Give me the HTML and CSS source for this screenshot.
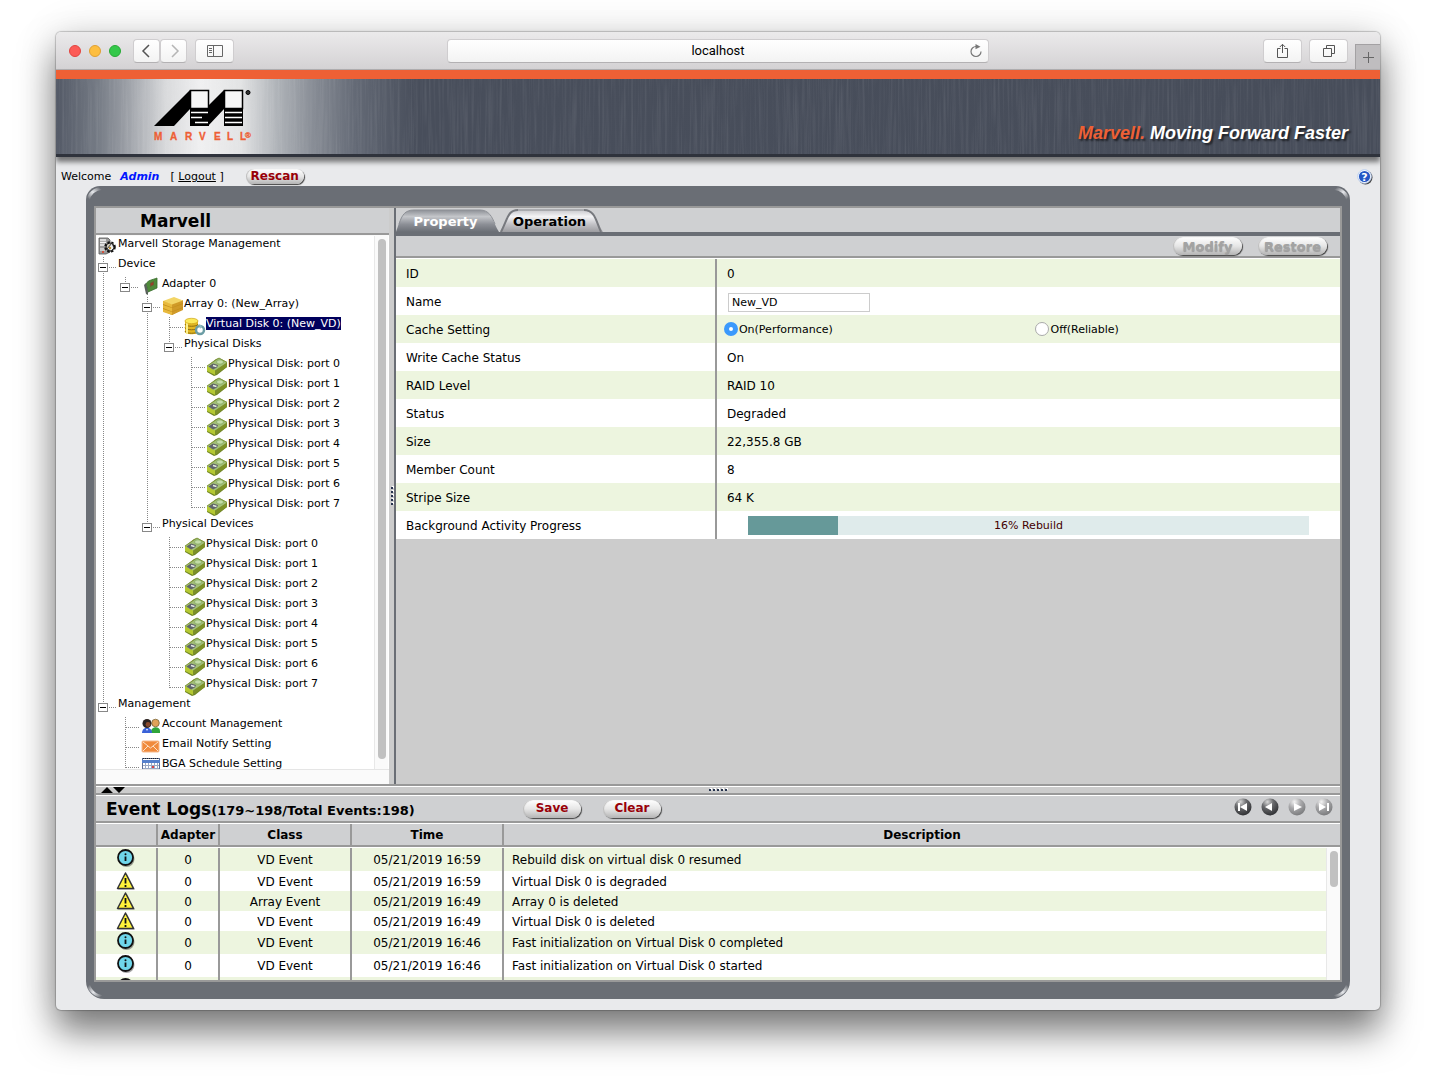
FILE: index.html
```html
<!DOCTYPE html>
<html lang="en">
<head>
    <meta charset="UTF-8">
    <meta name="viewport" content="width=device-width, initial-scale=1.0">
    <title>localhost</title>
    <link rel="stylesheet" href="styles.css">
</head>
<body>
    <!-- shared icons -->
    <svg class="defs" width="0" height="0">
        <defs>
            <linearGradient id="tabOn" x1="0" y1="0" x2="0" y2="1">
                <stop offset="0" stop-color="#8d9096"/><stop offset="0.3" stop-color="#c4c6ca"/><stop offset="0.65" stop-color="#8c8f96"/><stop offset="1" stop-color="#6a6e75"/>
            </linearGradient>
            <linearGradient id="tabOff" x1="0" y1="0" x2="0" y2="1">
                <stop offset="0" stop-color="#c8c8cc"/><stop offset="0.3" stop-color="#f4f4f6"/><stop offset="0.65" stop-color="#c2c2c6"/><stop offset="1" stop-color="#9c9ca0"/>
            </linearGradient>
            <linearGradient id="shine" x1="0" y1="1" x2="1" y2="0">
                <stop offset="0.1" stop-color="#fff" stop-opacity="0"/><stop offset="0.5" stop-color="#e4e6ea"/><stop offset="0.9" stop-color="#fff" stop-opacity="0"/>
            </linearGradient>
            <radialGradient id="ball" cx="0.35" cy="0.2" r="0.85">
                <stop offset="0" stop-color="#d8d8d8"/><stop offset="0.4" stop-color="#6a6b6e"/><stop offset="1" stop-color="#2c2d30"/>
            </radialGradient>
            <radialGradient id="ballOff" cx="0.35" cy="0.2" r="0.85">
                <stop offset="0" stop-color="#f4f4f4"/><stop offset="0.45" stop-color="#a8a8aa"/><stop offset="1" stop-color="#77787a"/>
            </radialGradient>
            <filter id="brushed" x="0" y="0" width="100%" height="100%">
                <feTurbulence type="fractalNoise" baseFrequency="0.45 0.012" numOctaves="3" seed="4"/>
                <feColorMatrix type="matrix" values="0 0 0 0 1  0 0 0 0 1  0 0 0 0 1  1.2 0 0 0 -0.5"/>
            </filter>
        </defs>
        <symbol id="disk" viewBox="0 0 22 20">
            <path d="M1 10 10 3l3-1 8 4v5l-10 8-3 1-7-4z" fill="#6f8424"/>
            <path d="M1 10v5l8 4v-5z" fill="#b4c832"/>
            <path d="M9 14v5l12-8V7z" fill="#7c9028"/>
            <path d="M1 10 13 2l8 4.500-12 8z" fill="#a3bf78"/>
            <path d="M2.500 10.500 7 7.500l5 1.500-1 2.500-4 2z" fill="#5f6468"/>
            <ellipse cx="14" cy="6" rx="3.500" ry="2.200" fill="#c3dca8" stroke="#7ba258" stroke-width="0.700"/>
            <path d="m7 9.500 3.500 1" stroke="#e6ece6" stroke-width="1.400"/>
            <path d="M1 10 13 2l8 4.500" fill="none" stroke="#7c9438" stroke-width="0.800"/>
        </symbol>
        <symbol id="storage" viewBox="0 0 22 20">
            <path d="M3 2h9l2 2v12l-4 2H3z" fill="#9a9a9a" stroke="#555" stroke-width="0.800"/>
            <path d="M4 4h6M4 6.500h6M4 9h6" stroke="#f2f2f2" stroke-width="1.300"/>
            <path d="M4 12h5v3H4z" fill="#c9c9c9"/>
            <circle cx="7" cy="16" r="1" fill="#e23b22"/>
            <circle cx="14" cy="11" r="4.800" fill="none" stroke="#111" stroke-width="2" stroke-dasharray="2.300 1.600"/>
            <circle cx="14" cy="11" r="4" fill="#d0c9b8" stroke="#111"/>
            <path d="m11 13 5-6 2 5-3 3z" fill="#eee" stroke="#222" stroke-width="0.900"/>
            <circle cx="14" cy="12" r="1.200" fill="#b98a2c"/>
        </symbol>
        <symbol id="adapter" viewBox="0 0 22 20">
            <path d="M6 8c2-4 6-4 11-6v10l-9 4z" fill="#4f8a3a" stroke="#356b2a" stroke-width="0.800"/>
            <path d="m4 9 2-2 2 9v3l-2-1z" fill="#59615a"/>
            <path d="m10 7 4-2v4l-4 2z" fill="#6d5a35"/>
            <path d="m11 7.500 2-1v2l-2 1z" fill="#a33b25"/>
        </symbol>
        <symbol id="array" viewBox="0 0 22 20">
            <path d="M1 5v10l9 4 11-6V5z" fill="#c48f1c"/>
            <path d="M1 5v3l9 3.500V8zM1 9v3l9 3.500V12zM1 13v3l9 3v-3z" fill="#e8b93c"/>
            <path d="m10 8 11-4v3L10 11.500zM10 12l11-4v3l-11 4.500zM10 16l11-4v2l-11 5z" fill="#d09a28"/>
            <path d="m1 5 11-4 9 3.500L10 8.500z" fill="#f3d566"/>
        </symbol>
        <symbol id="vdisk" viewBox="0 0 22 20">
            <path d="M1 5v11c0 3 13 3 13 0V5z" fill="#e3b722"/>
            <path d="M1 8c0 3 13 3 13 0M1 11.500c0 3 13 3 13 0M1 15c0 3 13 3 13 0" fill="none" stroke="#8d6d10"/>
            <path d="M3 5v13" stroke="#fbef8c" stroke-width="2"/>
            <ellipse cx="7.500" cy="5" rx="6.500" ry="2.700" fill="#fbe959" stroke="#cda51a" stroke-width="0.700"/>
            <circle cx="16" cy="14" r="4" fill="#fff" stroke="#6c9da5" stroke-width="2.500"/>
            <path d="m15 8 3 2-2 3z" fill="#90bcc2"/>
        </symbol>
        <symbol id="users" viewBox="0 0 22 20">
            <path d="M11 16c0-6 9-6 9-1v2h-9z" fill="#2fa53b"/>
            <circle cx="15.500" cy="7" r="3.800" fill="#e0a259" stroke="#6b5a2c" stroke-width="0.700"/>
            <path d="M2 17c0-7 10-7 10 0z" fill="#3a62d8"/>
            <circle cx="7" cy="7.500" r="4.500" fill="#2b2320"/>
            <circle cx="8" cy="8.500" r="2.400" fill="#8a4a2c"/>
            <path d="m6 13 1 2 1-2" fill="#fff"/>
        </symbol>
        <symbol id="mail" viewBox="0 0 22 20">
            <rect x="2" y="5" width="17" height="11" rx="1" fill="#f08a3c" stroke="#f6b98c"/>
            <path d="m3 6 7.500 6L18 6M3 15l5-5M18 15l-5-5" fill="none" stroke="#fde2c8"/>
        </symbol>
        <symbol id="calendar" viewBox="0 0 22 20">
            <rect x="2.500" y="2.500" width="17" height="14" fill="#fff" stroke="#5c6f96"/>
            <path d="M2 4h18v3H2z" fill="#5580cc"/>
            <path d="M3 2.500h16" stroke="#222" stroke-dasharray="1 1"/>
            <path d="M3 9.500h16M3 12.500h16M5.500 7v9M8.500 7v9M11.500 7v9M14.500 7v9M17.500 7v9" stroke="#9aa9c4"/>
            <path d="M12 10h2v2h-2z" fill="#d44"/>
        </symbol>
        <symbol id="info" viewBox="0 0 20 20">
            <circle cx="10.500" cy="11" r="8" fill="#000" opacity="0.35"/>
            <circle cx="9.500" cy="9.500" r="7.500" fill="#6fd6ea" stroke="#111" stroke-width="1.800"/>
            <path d="M9.500 8.500v4.500" stroke="#111" stroke-width="1.800"/>
            <circle cx="9.500" cy="6.300" r="1" fill="#111"/>
        </symbol>
        <symbol id="warn" viewBox="0 0 20 20">
            <path d="M2 18.500h17L11 3z" fill="#000" opacity="0.35"/>
            <path d="M9.500 2 17.500 17.500h-16z" fill="#fff33a" stroke="#333" stroke-width="1.500" stroke-linejoin="round"/>
            <path d="M9.500 7v5.500M9.500 14v2" stroke="#111" stroke-width="1.800"/>
        </symbol>
    </svg>

    <div class="window">
        <div class="toolbar">
            <div class="side">
                <div class="lights"><span class="red"></span><span class="amber"></span><span class="green"></span></div>
                <div class="history">
                    <button class="tool" aria-label="Back"><svg width="16" height="16"><path d="m10 2-6 6 6 6" fill="none" stroke="#555" stroke-width="1.500"/></svg></button>
                    <button class="tool" aria-label="Forward"><svg width="16" height="16"><path d="m6 2 6 6-6 6" fill="none" stroke="#b5b5b5" stroke-width="1.500"/></svg></button>
                </div>
                <button class="tool wide" aria-label="Sidebar"><svg width="16" height="12"><path d="M.5.500h15v11H.5zM6.500.500v11M2 3.500h3M2 5.500h3M2 7.500h3" fill="none" stroke="#666"/></svg></button>
            </div>
            <div class="address">
                <input type="text" value="localhost" aria-label="Address">
                <button aria-label="Reload"><svg width="14" height="14"><path d="M7 2.500a5 5 0 1 0 5 5" fill="none" stroke="#777" stroke-width="1.200"/><path d="m6.500 0 5 2.800-5 2.500z" fill="#777"/></svg></button>
            </div>
            <div class="side end-side">
                <button class="tool wide" aria-label="Share"><svg width="14" height="16"><path d="M4.500 5.500h-3v9h10v-9h-3M6.500 10V1.500M3.800 4l2.700-2.700L9.200 4" fill="none" stroke="#555"/></svg></button>
                <button class="tool wide" aria-label="Tabs"><svg width="14" height="14"><path d="M1.500 4.500h8v8h-8zM4.500 4V1.500h8v8H10" fill="none" stroke="#555"/></svg></button>
                <button class="newtab" aria-label="New tab"><svg width="13" height="13"><path d="M6.500 1v11M1 6.500h11" stroke="#666"/></svg></button>
            </div>
        </div>

        <div class="banner">
            <svg class="metal" width="100%" height="100%"><rect width="100%" height="100%" filter="url(#brushed)"/></svg>
            <svg class="logo" width="100" height="54">
                <path d="M0 37 36 1v19L20 37zM54 17 70 1v19L54 37H36v-2h12z" fill="#000"/>
                <path d="M36.500 1.500h18v18h-18zM70.500 1.500h18v18h-18z" fill="#f6f6f6" stroke="#000" stroke-width="1.500"/>
                <path d="M36 20h19v17H36zM70 20h19v17H70z" fill="#000"/>
                <path d="M37 23.500h17M37 28.500h11M41 33.500h13M71 23.500h17M71 28.500h17M71 33.500h17" stroke="#fff" stroke-width="1.500"/>
                <circle cx="94" cy="3.500" r="2" fill="#333" stroke="#000"/>
                <text x="0 16 31 45 60 73 86 91" y="51" class="logo-text">MARVELL<tspan class="logo-reg" dy="-2">®</tspan></text>
            </svg>
            <p class="slogan"><span>Marvell.</span> Moving Forward Faster</p>
        </div>

        <div class="userbar">
            <span>Welcome</span>
            <b class="user">Admin</b>
            <span>[ <a href="#">Logout</a> ]</span>
            <button class="pill rescan">Rescan</button>
            <button class="help" aria-label="Help"><svg width="16" height="16"><circle cx="8.500" cy="8.500" r="7" fill="#444"/><circle cx="7.500" cy="7.500" r="6.800" fill="#fff" stroke="#b8cdf0"/><circle cx="7.500" cy="7.500" r="5.600" fill="#2457c5"/><text x="7.500" y="11.500" text-anchor="middle" class="help-mark">?</text></svg></button>
        </div>

        <div class="frame">
            <svg class="corner tl" width="22" height="22"><path d="M2 15C3 8 8 3 17 2" fill="none" stroke="url(#shine)" stroke-width="3"/></svg>
            <svg class="corner tr" width="22" height="22"><path d="M2 15C3 8 8 3 17 2" fill="none" stroke="url(#shine)" stroke-width="3"/></svg>
            <svg class="corner bl" width="22" height="22"><path d="M2 16C3 9 9 3 18 2" fill="none" stroke="url(#shine)" stroke-width="3"/></svg>
            <svg class="corner br" width="22" height="22"><path d="M2 16C3 9 9 3 18 2" fill="none" stroke="url(#shine)" stroke-width="3"/></svg>
            <div class="main">
                <div class="panes">
                    <div class="left">
                        <h1>Marvell</h1>
                        <div class="treewrap">
                            <div class="tree">
                                <div class="node"><svg class="ico"><use href="#storage"/></svg><span>Marvell Storage Management</span></div>
                                <div class="node"><i class="box line"></i><span>Device</span></div>
                                <div class="node"><i class="line"></i><i class="box end"></i><svg class="ico"><use href="#adapter"/></svg><span>Adapter 0</span></div>
                                <div class="node"><i class="line"></i><i></i><i class="box line"></i><svg class="ico"><use href="#array"/></svg><span>Array 0: (New_Array)</span></div>
                                <div class="node"><i class="line"></i><i></i><i class="line"></i><i class="line tee"></i><svg class="ico"><use href="#vdisk"/></svg><span class="selected">Virtual Disk 0: (New_VD)</span></div>
                                <div class="node"><i class="line"></i><i></i><i class="line"></i><i class="box end"></i><span>Physical Disks</span></div>
                                <div class="node"><i class="line"></i><i></i><i class="line"></i><i></i><i class="line tee"></i><svg class="ico"><use href="#disk"/></svg><span>Physical Disk: port 0</span></div>
                                <div class="node"><i class="line"></i><i></i><i class="line"></i><i></i><i class="line tee"></i><svg class="ico"><use href="#disk"/></svg><span>Physical Disk: port 1</span></div>
                                <div class="node"><i class="line"></i><i></i><i class="line"></i><i></i><i class="line tee"></i><svg class="ico"><use href="#disk"/></svg><span>Physical Disk: port 2</span></div>
                                <div class="node"><i class="line"></i><i></i><i class="line"></i><i></i><i class="line tee"></i><svg class="ico"><use href="#disk"/></svg><span>Physical Disk: port 3</span></div>
                                <div class="node"><i class="line"></i><i></i><i class="line"></i><i></i><i class="line tee"></i><svg class="ico"><use href="#disk"/></svg><span>Physical Disk: port 4</span></div>
                                <div class="node"><i class="line"></i><i></i><i class="line"></i><i></i><i class="line tee"></i><svg class="ico"><use href="#disk"/></svg><span>Physical Disk: port 5</span></div>
                                <div class="node"><i class="line"></i><i></i><i class="line"></i><i></i><i class="line tee"></i><svg class="ico"><use href="#disk"/></svg><span>Physical Disk: port 6</span></div>
                                <div class="node"><i class="line"></i><i></i><i class="line"></i><i></i><i class="end tee"></i><svg class="ico"><use href="#disk"/></svg><span>Physical Disk: port 7</span></div>
                                <div class="node"><i class="line"></i><i></i><i class="box end"></i><span>Physical Devices</span></div>
                                <div class="node"><i class="line"></i><i></i><i></i><i class="line tee"></i><svg class="ico"><use href="#disk"/></svg><span>Physical Disk: port 0</span></div>
                                <div class="node"><i class="line"></i><i></i><i></i><i class="line tee"></i><svg class="ico"><use href="#disk"/></svg><span>Physical Disk: port 1</span></div>
                                <div class="node"><i class="line"></i><i></i><i></i><i class="line tee"></i><svg class="ico"><use href="#disk"/></svg><span>Physical Disk: port 2</span></div>
                                <div class="node"><i class="line"></i><i></i><i></i><i class="line tee"></i><svg class="ico"><use href="#disk"/></svg><span>Physical Disk: port 3</span></div>
                                <div class="node"><i class="line"></i><i></i><i></i><i class="line tee"></i><svg class="ico"><use href="#disk"/></svg><span>Physical Disk: port 4</span></div>
                                <div class="node"><i class="line"></i><i></i><i></i><i class="line tee"></i><svg class="ico"><use href="#disk"/></svg><span>Physical Disk: port 5</span></div>
                                <div class="node"><i class="line"></i><i></i><i></i><i class="line tee"></i><svg class="ico"><use href="#disk"/></svg><span>Physical Disk: port 6</span></div>
                                <div class="node"><i class="line"></i><i></i><i></i><i class="end tee"></i><svg class="ico"><use href="#disk"/></svg><span>Physical Disk: port 7</span></div>
                                <div class="node"><i class="box end"></i><span>Management</span></div>
                                <div class="node"><i></i><i class="line tee"></i><svg class="ico"><use href="#users"/></svg><span>Account Management</span></div>
                                <div class="node"><i></i><i class="line tee"></i><svg class="ico"><use href="#mail"/></svg><span>Email Notify Setting</span></div>
                                <div class="node"><i></i><i class="end tee"></i><svg class="ico"><use href="#calendar"/></svg><span>BGA Schedule Setting</span></div>
                            </div>
                            <div class="track"><div class="thumb"></div></div>
                        </div>
                        <div class="hscroll"></div>
                    </div>

                    <div class="vsplit"><i></i><i></i><i></i><i></i><i></i></div>

                    <div class="right">
                        <div class="tabs">
                            <button class="tab active"><svg width="103" height="24"><path d="M0 24C4 14 5 2 18 2h66c11 0 13 12 19 22z" fill="url(#tabOn)"/><path d="M3 16C6 7 9 2 18 2h66c9 0 12 7 15 14" fill="none" stroke="#8d9096"/></svg><span>Property</span></button>
                            <button class="tab"><svg width="103" height="24"><path d="M0 24C6 14 6 2 18 2h66c11 0 13 12 19 22z" fill="url(#tabOff)"/><path d="M1 24C8 10 8 2 18 2M84 2c11 0 12 11 17 22" fill="none" stroke="#77797e" stroke-width="2"/><path d="M18 2h66" stroke="#85878c"/></svg><span>Operation</span></button>
                        </div>
                        <div class="actions">
                            <button class="pill big" disabled>Modify</button>
                            <button class="pill big" disabled>Restore</button>
                        </div>
                        <table class="props">
                            <tr><th>ID</th><td>0</td></tr>
                            <tr><th><label for="vdname">Name</label></th><td><input type="text" id="vdname" value="New_VD"></td></tr>
                            <tr><th>Cache Setting</th><td class="flush">
                                <div class="radios">
                                    <label><input type="radio" name="cache" checked>On(Performance)</label>
                                    <label><input type="radio" name="cache">Off(Reliable)</label>
                                </div>
                            </td></tr>
                            <tr><th>Write Cache Status</th><td>On</td></tr>
                            <tr><th>RAID Level</th><td>RAID 10</td></tr>
                            <tr><th>Status</th><td>Degraded</td></tr>
                            <tr><th>Size</th><td>22,355.8 GB</td></tr>
                            <tr><th>Member Count</th><td>8</td></tr>
                            <tr><th>Stripe Size</th><td>64 K</td></tr>
                            <tr><th>Background Activity Progress</th><td class="flush">
                                <div class="progress"><div class="fill" style="width: 16%"></div><span>16% Rebuild</span></div>
                            </td></tr>
                        </table>
                    </div>
                </div>

                <div class="hsplit">
                    <svg class="arrows" width="24" height="6"><path d="M0 6 6 0l6 6zM12 0h12l-6 6z"/></svg>
                    <div class="dots"><i></i><i></i><i></i><i></i><i></i></div>
                </div>

                <div class="loghead">
                    <h2>Event Logs<span>(179~198/Total Events:198)</span></h2>
                    <button class="pill">Save</button>
                    <button class="pill">Clear</button>
                    <div class="pager">
                        <button aria-label="First page"><svg width="18" height="18"><circle cx="9" cy="9" r="8.500" fill="url(#ball)"/><path d="M4 5h2v8H4zM13 5v8L6 9z" fill="#fff"/></svg></button>
                        <button aria-label="Previous page"><svg width="18" height="18"><circle cx="9" cy="9" r="8.500" fill="url(#ball)"/><path d="M11 5v8L4 9z" fill="#fff"/></svg></button>
                        <button aria-label="Next page" disabled><svg width="18" height="18"><circle cx="9" cy="9" r="8.500" fill="url(#ballOff)"/><path d="M6 5v8l8-4z" fill="#fff"/></svg></button>
                        <button aria-label="Last page" disabled><svg width="18" height="18"><circle cx="9" cy="9" r="8.500" fill="url(#ballOff)"/><path d="M4 5v8l7-4zM12 5h2v8h-2z" fill="#fff"/></svg></button>
                    </div>
                </div>

                <table class="log logcols">
                    <colgroup><col class="c-icon"><col class="c-adapter"><col class="c-class"><col class="c-time"><col></colgroup>
                    <thead><tr><th></th><th>Adapter</th><th>Class</th><th>Time</th><th>Description</th></tr></thead>
                </table>
                <div class="logbody">
                    <table class="log">
                        <colgroup><col class="c-icon"><col class="c-adapter"><col class="c-class"><col class="c-time"><col></colgroup>
                        <tbody>
                            <tr class="info"><td><svg><use href="#info"/></svg></td><td>0</td><td>VD Event</td><td>05/21/2019 16:59</td><td>Rebuild disk on virtual disk 0 resumed</td></tr>
                            <tr><td><svg><use href="#warn"/></svg></td><td>0</td><td>VD Event</td><td>05/21/2019 16:59</td><td>Virtual Disk 0 is degraded</td></tr>
                            <tr><td><svg><use href="#warn"/></svg></td><td>0</td><td>Array Event</td><td>05/21/2019 16:49</td><td>Array 0 is deleted</td></tr>
                            <tr><td><svg><use href="#warn"/></svg></td><td>0</td><td>VD Event</td><td>05/21/2019 16:49</td><td>Virtual Disk 0 is deleted</td></tr>
                            <tr class="info"><td><svg><use href="#info"/></svg></td><td>0</td><td>VD Event</td><td>05/21/2019 16:46</td><td>Fast initialization on Virtual Disk 0 completed</td></tr>
                            <tr class="info"><td><svg><use href="#info"/></svg></td><td>0</td><td>VD Event</td><td>05/21/2019 16:46</td><td>Fast initialization on Virtual Disk 0 started</td></tr>
                            <tr class="info"><td><svg><use href="#info"/></svg></td><td></td><td></td><td></td><td></td></tr>
                        </tbody>
                    </table>
                    <div class="track"><div class="thumb"></div></div>
                </div>
            </div>
        </div>
    </div>
</body>
</html>
```

FILE: styles.css
```css
* {
    box-sizing: border-box;
}
body {
    margin: 0;
    padding: 32px 56px 80px;
    background: #fff;
    font-family: Verdana, "DejaVu Sans", sans-serif;
    font-size: 12px;
    color: #000;
}
button, input {
    font-family: inherit;
    font-size: inherit;
    color: inherit;
}
button {
    padding: 0;
    border: none;
    background: none;
    cursor: pointer;
}
svg {
    display: block;
}
h1, h2, p {
    margin: 0;
}
table {
    border-collapse: separate;
    border-spacing: 0;
    table-layout: fixed;
    width: 100%;
}
.defs {
    position: absolute;
}
.window {
    background: #e9eaec;
    border-radius: 5px;
    overflow: hidden;
    padding-bottom: 11px;
    box-shadow: 0 0 1px 1px rgba(0, 0, 0, 0.2), 0 22px 36px rgba(0, 0, 0, 0.5), 0 0 40px rgba(0, 0, 0, 0.12);
}

/* browser toolbar */
.toolbar {
    display: flex;
    align-items: center;
    height: 38px;
    background: linear-gradient(#ebeaeb, #d4d2d4);
    border-bottom: 1px solid #b0aeb0;
}
.side {
    display: flex;
    align-items: center;
    flex: 1;
    height: 100%;
    padding-left: 13px;
}
.end-side {
    justify-content: flex-end;
    gap: 7px;
}
.lights {
    display: flex;
    gap: 8px;
    margin-right: 12px;
}
.lights span {
    width: 12px;
    height: 12px;
    border-radius: 50%;
}
.lights .red {
    background: #fc5b57;
    border: 1px solid #e2443f;
}
.lights .amber {
    background: #fdbe40;
    border: 1px solid #e0a032;
}
.lights .green {
    background: #34c84a;
    border: 1px solid #27aa35;
}
.history {
    display: flex;
    margin-right: 8px;
}
.tool {
    display: flex;
    align-items: center;
    justify-content: center;
    width: 27px;
    height: 24px;
    background: linear-gradient(#fff, #f3f3f3);
    border: 1px solid #cfcdcf;
    border-bottom-color: #b3b1b3;
    border-radius: 4px;
}
.tool.wide {
    width: 39px;
}
.address {
    display: flex;
    align-items: center;
    width: 41%;
    height: 24px;
    padding: 0 5px 0 19px;
    background: linear-gradient(#fff, #f3f3f3);
    border: 1px solid #cfcdcf;
    border-bottom-color: #b3b1b3;
    border-radius: 4px;
}
.address input {
    flex: 1;
    min-width: 0;
    padding: 0;
    border: none;
    background: none;
    text-align: center;
    font-family: Roboto, sans-serif;
    font-size: 13px;
}
.newtab {
    display: flex;
    align-items: center;
    justify-content: center;
    align-self: flex-end;
    width: 25px;
    height: 25px;
    background: #bfbdbf;
    border: 1px solid #a3a1a3;
    border-width: 1px 0 0 1px;
}

/* page banner */
.banner {
    position: relative;
    display: flex;
    align-items: flex-end;
    justify-content: space-between;
    height: 87px;
    padding: 0 32px 12px 98px;
    border-top: 9px solid #ee6035;
    border-bottom: 3px solid #2f333c;
    background: linear-gradient(90deg, #535966 0, #737983 40px, #9a9ea5 70px, #d9dadc 110px, #f0f0f1 145px, #e2e3e4 185px, #b0b4b9 220px, #858a93 260px, #636975 300px, #484e5b 360px, #474d5a 100%);
    box-shadow: 0 5px 5px rgba(0, 0, 0, 0.5);
}
.metal {
    position: absolute;
    top: 0;
    left: 0;
    opacity: 0.14;
}
.logo, .slogan {
    position: relative;
}
.logo {
    margin-bottom: -1px;
}
.logo-text {
    font-family: "Liberation Sans", Arial, sans-serif;
    font-size: 10px;
    font-weight: bold;
    fill: #ee5f35;
    stroke: #ee5f35;
    stroke-width: 0.3px;
}
.logo-reg {
    font-size: 8px;
}
.slogan {
    font-family: "Liberation Sans", Arial, sans-serif;
    font-size: 18px;
    font-weight: bold;
    font-style: italic;
    line-height: 18px;
    color: #fff;
    text-shadow: 2px 2px 2px rgba(0, 0, 0, 0.6);
}
.slogan span {
    color: #ee6035;
}
.userbar {
    display: flex;
    align-items: center;
    height: 29px;
    padding: 10px 7px 0 5px;
    font-size: 11px;
    line-height: 15px;
}
.userbar a {
    color: #000;
}
.user {
    margin: 0 11px 0 9px;
    font-style: italic;
    color: #0016ff;
}
.help {
    margin-left: auto;
}
.help-mark {
    font-size: 11px;
    font-weight: bold;
    fill: #fff;
}

/* rounded silver buttons */
.pill {
    width: 58px;
    height: 18px;
    border-radius: 9px;
    background: linear-gradient(#fff, #e6e6e6 50%, #b4b4b4);
    box-shadow: 1px 1px 1px #444, inset 1px 0 1px #bbb;
    font-size: 12px;
    font-weight: bold;
    line-height: 17px;
    color: #990008;
}
.pill.rescan {
    height: 15px;
    margin-left: 22px;
    line-height: 15px;
}
.pill.big {
    width: 69px;
    font-size: 13px;
}
.pill:disabled {
    color: #a3a3a3;
    text-shadow: 0 1px 1px #999;
}

/* framed workspace */
.frame {
    position: relative;
    margin: 0 30px;
    padding: 20px 8px 17px;
    background: #6a6e75;
    border-radius: 14px 14px 18px 18px;
}
.corner {
    position: absolute;
}
.tl {
    top: 0;
    left: 0;
}
.tr {
    top: 0;
    right: 0;
    transform: scaleX(-1);
}
.bl {
    bottom: 0;
    left: 0;
    transform: scaleY(-1);
}
.br {
    right: 0;
    bottom: 0;
    transform: scale(-1);
}
.main {
    position: relative;
    border: 2px solid #999;
    background: #fff;
}
.panes {
    display: flex;
    height: 576px;
    background: #ccc;
}
.left {
    display: flex;
    flex-direction: column;
    width: 293px;
    background: #fafafa;
}
h1 {
    height: 27px;
    margin-bottom: 1px;
    padding-left: 44px;
    background: #cfd0d2;
    border-bottom: 2px solid #999;
    font-size: 17px;
    line-height: 26px;
}
.treewrap {
    display: flex;
    flex: 1;
    min-height: 0;
    padding-right: 1px;
    background: #fff;
}
.tree {
    flex: 1;
    overflow: hidden;
    font-size: 11px;
    line-height: 16px;
}
.track {
    width: 14px;
    padding: 3px 2px 10px 3px;
    background: #fafafa;
    border-left: 1px solid #e8e8e8;
}
.thumb {
    width: 8px;
    height: 100%;
    background: #c1c1c1;
    border-radius: 4px;
}
.hscroll {
    height: 15px;
    border-top: 1px solid #e5e5e5;
}
.node {
    display: flex;
    align-items: flex-start;
    height: 20px;
    white-space: nowrap;
}
.node > i {
    position: relative;
    width: 22px;
    height: 20px;
}
.ico {
    width: 22px;
    height: 20px;
}
.line::before, .end::before {
    content: "";
    position: absolute;
    top: 1px;
    bottom: 0;
    left: 7px;
    border-left: 1px dotted #888;
}
.end::before {
    bottom: 8px;
}
.tee::after {
    content: "";
    position: absolute;
    top: 11px;
    left: 8px;
    right: 1px;
    border-top: 1px dotted #888;
}
/* expander: a small square with a minus sign and a dotted lead to the label */
.box {
    background: repeating-linear-gradient(90deg, #888 0 1px, #fff 1px 2px) 13px 11px / 8px 1px no-repeat;
}
.box::after {
    content: "";
    position: absolute;
    top: 7px;
    left: 2px;
    width: 10px;
    height: 9px;
    background: linear-gradient(#000, #000) center / 6px 1px no-repeat #fff;
    outline: 1px solid #888;
    outline-offset: -1px;
}
.selected {
    height: 13px;
    margin-top: 1px;
    background: #00005c;
    color: #fff;
    line-height: 14px;
}
.vsplit {
    display: flex;
    flex-direction: column;
    align-items: center;
    justify-content: center;
    gap: 2px;
    width: 7px;
    border-right: 2px solid #6a6e75;
}
.vsplit i, .dots i {
    width: 2px;
    height: 2px;
    background: #26334d;
    box-shadow: 1px -1px 0 #fff;
}
.right {
    flex: 1;
    min-width: 0;
}
.tabs {
    display: flex;
    gap: 1px;
    height: 28px;
    background: #cfd0d2;
    border-bottom: 4px solid #6a6e75;
}
.tab {
    position: relative;
    width: 103px;
    height: 24px;
    padding: 2px 4px 0 0;
    font-size: 13px;
    font-weight: bold;
}
.tab svg {
    position: absolute;
    top: 0;
    left: 0;
}
.tab span {
    position: relative;
}
.tab.active {
    color: #fff;
}
.actions {
    display: flex;
    justify-content: flex-end;
    gap: 16px;
    height: 22px;
    padding: 1px 13px 0 0;
    background: #cfd0d2;
    border-bottom: 2px solid #999;
}
.props {
    border-top: 1px solid #fff;
}
.props tr {
    background: #fff;
}
.props tr:nth-child(odd), .logbody tr:nth-child(odd) {
    background: #edf5df;
}
.props th {
    width: 34%;
    height: 28px;
    padding: 2px 0 0 10px;
    border-right: 2px solid #999;
    font-weight: normal;
    text-align: left;
}
.props td {
    padding: 2px 10px 0;
}
.props td.flush {
    padding: 0;
}
.props input[type="text"] {
    display: block;
    width: 142px;
    height: 19px;
    margin-left: 1px;
    padding: 1px 3px 0;
    border: 1px solid #ccc;
    font-size: 11px;
}
.radios {
    display: flex;
    font-size: 11px;
}
.radios label {
    display: flex;
    align-items: center;
    flex: 1;
    padding-left: 7px;
}
.radios input {
    appearance: none;
    width: 14px;
    height: 14px;
    margin: 0 1px 0 0;
    border: 1px solid #aaa;
    border-radius: 50%;
    background: #fff;
}
.radios input:checked {
    border: 5px solid #3b99fc;
}
.progress {
    position: relative;
    height: 19px;
    margin: 1px 31px 0;
    background: #dfebeb;
    font-size: 11px;
    line-height: 19px;
    text-align: center;
    color: #400;
}
.progress .fill {
    position: absolute;
    top: 0;
    left: 0;
    height: 100%;
    background: #669999;
}
.progress span {
    position: relative;
}

/* splitter above the log */
.hsplit {
    display: flex;
    align-items: center;
    height: 11px;
    margin-bottom: 1px;
    padding-left: 5px;
    background: #ccc;
    border-top: 2px solid #999;
    border-bottom: 2px solid #999;
    box-shadow: inset 0 1px 0 #fff;
}
.dots {
    display: flex;
    gap: 2px;
    margin: 0 auto;
    padding-right: 29px;
}

/* event log */
.loghead {
    display: flex;
    align-items: center;
    gap: 22px;
    height: 27px;
    margin-bottom: 1px;
    padding: 0 7px 0 10px;
    background: #cfd0d2;
    border-bottom: 2px solid #999;
}
h2 {
    width: 395px;
    font-size: 17px;
    white-space: nowrap;
}
h2 span {
    font-size: 13px;
}
.pager {
    display: flex;
    gap: 9px;
    margin: 0 0 3px auto;
}
.c-icon, .c-adapter {
    width: 62px;
}
.c-class {
    width: 132px;
}
.c-time {
    width: 152px;
}
.log th, .log td {
    height: 20px;
    padding: 0;
    border-right: 2px solid #999;
    text-align: center;
}
.log th:last-child, .log td:last-child {
    border-right: none;
}
.log td:last-child {
    padding-left: 8px;
    text-align: left;
}
.logcols {
    margin-bottom: 1px;
    background: #cfd0d2;
    border-bottom: 2px solid #999;
}
.logbody .info td {
    height: 23px;
}
.logcols th {
    padding-top: 1px;
    height: 21px;
}
.logbody {
    display: flex;
    height: 132px;
    overflow: hidden;
}
.logbody .log {
    flex: 1;
    align-self: flex-start;
}
.logbody td {
    padding-top: 1px;
}
.logbody td:first-child {
    padding-top: 0;
    vertical-align: top;
}
.logbody td svg {
    width: 20px;
    height: 20px;
    margin: 0 auto;
}
.logbody .thumb {
    height: 36px;
}
```
